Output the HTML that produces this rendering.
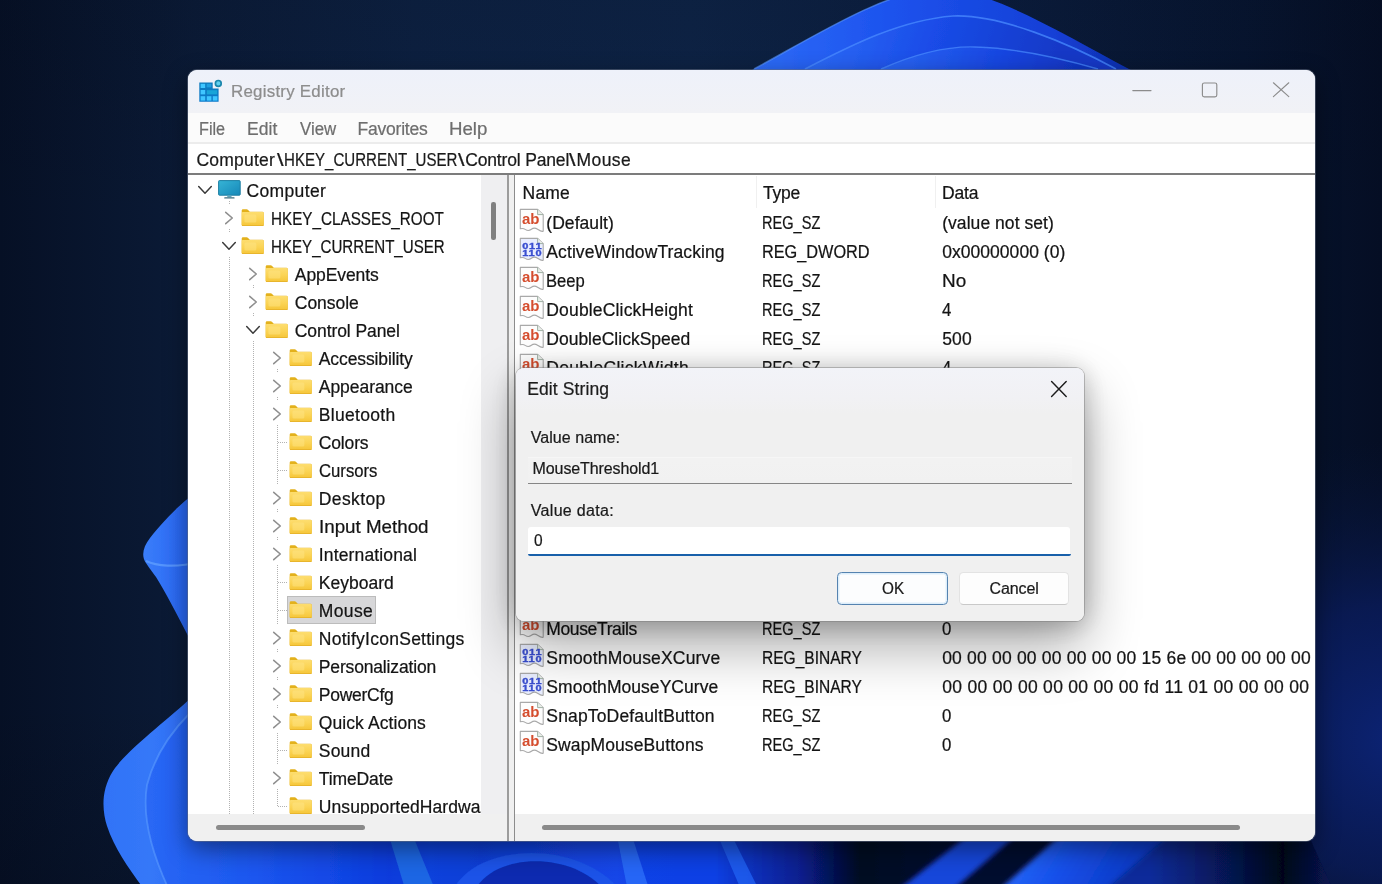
<!DOCTYPE html>
<html lang="en"><head><meta charset="utf-8"><title>Registry Editor</title>
<style>
html,body{margin:0;padding:0}
body{width:1382px;height:884px;overflow:hidden;position:relative;background:#08142b;
 font-family:"Liberation Sans",sans-serif}
.t{position:absolute;white-space:nowrap;line-height:24px;height:24px;-webkit-text-stroke:.22px}
.abs{position:absolute}
#win{position:absolute;left:188px;top:70px;width:1127px;height:771px;border-radius:9px;overflow:hidden;background:#fff;will-change:transform}
</style></head><body>

<svg class="abs" style="left:0;top:0" width="1382" height="884" viewBox="0 0 1382 884">
<defs>
<linearGradient id="bg" x1="0" y1="0" x2="1382" y2="0" gradientUnits="userSpaceOnUse">
 <stop offset="0" stop-color="#061025"/><stop offset=".14" stop-color="#0b1b37"/><stop offset=".3" stop-color="#0d2142"/><stop offset=".5" stop-color="#0e2447"/><stop offset=".72" stop-color="#0b1d3e"/><stop offset=".9" stop-color="#071530"/><stop offset="1" stop-color="#050e24"/>
</linearGradient>
<linearGradient id="bgv" x1="0" y1="0" x2="0" y2="884" gradientUnits="userSpaceOnUse">
 <stop offset="0" stop-color="#040a18" stop-opacity=".12"/><stop offset=".25" stop-color="#040a18" stop-opacity="0"/><stop offset=".8" stop-color="#040a18" stop-opacity="0"/><stop offset="1" stop-color="#040a18" stop-opacity=".3"/>
</linearGradient>
<linearGradient id="a1" x1="754" y1="0" x2="1129" y2="0" gradientUnits="userSpaceOnUse">
 <stop offset="0" stop-color="#2e6cf7"/><stop offset=".35" stop-color="#1d53ee"/><stop offset=".8" stop-color="#143fd6"/><stop offset="1" stop-color="#0f2fae"/>
</linearGradient>
<linearGradient id="a2" x1="805" y1="10" x2="1050" y2="90" gradientUnits="userSpaceOnUse">
 <stop offset="0" stop-color="#2f6ff8"/><stop offset=".5" stop-color="#1a4ce8"/><stop offset="1" stop-color="#1238c6"/>
</linearGradient>
<linearGradient id="a3" x1="880" y1="40" x2="1080" y2="90" gradientUnits="userSpaceOnUse">
 <stop offset="0" stop-color="#2b69f6"/><stop offset=".6" stop-color="#1745e0"/><stop offset="1" stop-color="#1034c0"/>
</linearGradient>
<linearGradient id="p1" x1="140" y1="0" x2="260" y2="0" gradientUnits="userSpaceOnUse">
 <stop offset="0" stop-color="#3c80fa"/><stop offset=".35" stop-color="#2a68f4"/><stop offset="1" stop-color="#1d55ee"/>
</linearGradient>
<linearGradient id="p2" x1="100" y1="0" x2="200" y2="0" gradientUnits="userSpaceOnUse">
 <stop offset="0" stop-color="#2f72f7"/><stop offset=".5" stop-color="#3578f8"/><stop offset="1" stop-color="#2b69f5"/>
</linearGradient>
<linearGradient id="p3" x1="145" y1="0" x2="270" y2="0" gradientUnits="userSpaceOnUse">
 <stop offset="0" stop-color="#2a68f5"/><stop offset=".4" stop-color="#2260f2"/><stop offset="1" stop-color="#1b54ee"/>
</linearGradient>
<linearGradient id="bt" x1="260" y1="0" x2="1382" y2="0" gradientUnits="userSpaceOnUse">
 <stop offset="0.0000" stop-color="#1b54ee"/>
 <stop offset="0.0624" stop-color="#1248e6"/>
 <stop offset="0.1150" stop-color="#0d3bdc"/>
 <stop offset="0.1515" stop-color="#1042dc"/>
 <stop offset="0.1961" stop-color="#0f3ed6"/>
 <stop offset="0.2674" stop-color="#1243e2"/>
 <stop offset="0.3182" stop-color="#1446e8"/>
 <stop offset="0.3387" stop-color="#0f42e6"/>
 <stop offset="0.4055" stop-color="#0e40e4"/>
 <stop offset="0.4234" stop-color="#0c36cc"/>
 <stop offset="0.4813" stop-color="#081f8e"/>
 <stop offset="0.5348" stop-color="#030722"/>
 <stop offset="0.6061" stop-color="#040a2e"/>
 <stop offset="1.0000" stop-color="#040a2c"/>
</linearGradient>
<linearGradient id="band" x1="1030" y1="840" x2="1130" y2="900" gradientUnits="userSpaceOnUse">
 <stop offset="0" stop-color="#2464f6"/><stop offset=".35" stop-color="#1650ea"/><stop offset="1" stop-color="#0b36c0"/>
</linearGradient>
<linearGradient id="rt" x1="1150" y1="0" x2="1334" y2="0" gradientUnits="userSpaceOnUse">
 <stop offset="0" stop-color="#0a2c9a"/><stop offset=".45" stop-color="#06154e"/><stop offset=".72" stop-color="#03061a"/><stop offset="1" stop-color="#081654"/>
</linearGradient>
<radialGradient id="rs" cx="1395" cy="740" r="300" gradientUnits="userSpaceOnUse">
 <stop offset="0" stop-color="#0c2478" stop-opacity=".95"/><stop offset=".45" stop-color="#0a1c5c" stop-opacity=".8"/><stop offset="1" stop-color="#081538" stop-opacity="0"/>
</radialGradient>
<filter id="b1" x="-5%" y="-5%" width="110%" height="110%"><feGaussianBlur stdDeviation="0.7"/></filter>
<filter id="b3" x="-5%" y="-20%" width="110%" height="140%"><feGaussianBlur stdDeviation="2.5"/></filter>
</defs>
<rect width="1382" height="884" fill="url(#bg)"/><rect width="1382" height="884" fill="url(#bgv)"/>
<!-- right side deep-blue glow -->
<rect x="1180" y="380" width="202" height="504" fill="url(#rs)"/>
<!-- top arch -->
<g filter="url(#b1)">
<path d="M690 102 L754 69 C815 36 880 -6 940 -14 C1000 -6 1070 38 1129 69 L1190 100 Z" fill="url(#a1)"/>
<path d="M760 92 L805 69 C850 46 900 20 953 16 C1000 14 1070 44 1116 69 L1160 95 Z" fill="url(#a2)"/>
<path d="M805 69 C850 46 900 20 953 16 C1000 14 1070 44 1116 69" fill="none" stroke="#4a8bff" stroke-width="1.6" opacity=".75"/>
<path d="M850 86 L881 69 C915 54 945 46 975 47 C1015 48 1060 58 1098 69 L1140 85 Z" fill="url(#a3)"/>
<path d="M881 69 C915 54 945 46 975 47 C1015 48 1060 58 1098 69" fill="none" stroke="#4a8bff" stroke-width="1.4" opacity=".7"/>
<path d="M754 69 C815 36 880 -6 940 -14" fill="none" stroke="#5a98ff" stroke-width="1.5" opacity=".6"/>
</g>
<!-- left petals -->
<g filter="url(#b1)">
<path d="M270 440 C240 465 205 485 188.6 498 C176 508 161 524 150 538 C143 547 141 556 146 563 C150 569 153 573 156 577 C164 590 176 612 188.6 637 L270 670 Z" fill="url(#p1)"/>
<path d="M146 561 C156 566 175 568 200 562" fill="none" stroke="#62a0ff" stroke-width="2.2" opacity=".75"/>
<path d="M270 630 C235 660 205 684 188.6 700 C165 722 127 750 113 771 C101 790 102 810 107 826 C115 850 130 870 146 892 L270 892 Z" fill="url(#p2)"/>
<path d="M270 650 C230 685 205 700 190 713 C170 733 154 758 147 785 C142 815 150 850 170 892 L270 892 Z" fill="url(#p3)"/>
<path d="M190 713 C170 733 154 758 147 785 C142 815 150 850 170 892" fill="none" stroke="#5c9cff" stroke-width="1.8" opacity=".6"/>
</g>
<!-- bottom strip -->
<g filter="url(#b1)">
<path d="M258 834 L1300 834 L1326 892 L258 892 Z" fill="url(#bt)"/>
<path d="M389 836 L413 836 L436 892 L406 892 Z" fill="#1d66e4"/>
<path d="M452 892 C474 842 580 838 622 892 Z" fill="#1a52e8"/><path d="M474 892 C492 852 574 850 606 892 Z" fill="#0a2cb0"/>
<path d="M617 836 L632 836 L650 892 L628 892 Z" fill="#2b6cf8" opacity=".85"/>
<path d="M718 836 L732 836 L760 892 L742 892 Z" fill="#2262f2" opacity=".8"/>
<g filter="url(#b3)"><path d="M972 832 L1020 832 L946 896 L890 896 Z" fill="#1646da"/></g>
<path d="M1150 834 L1308 834 L1334 892 L1080 892 Z" fill="url(#rt)"/>
<g filter="url(#b3)"><path d="M1064 832 L1172 832 L1098 896 L992 896 Z" fill="url(#band)"/></g>
</g>
</svg>

<div id="winshadow" class="abs" style="left:188px;top:70px;width:1127px;height:771px;border-radius:9px;box-shadow:0 0 0 1px rgba(96,108,130,.55),0 8px 24px rgba(0,0,0,.45)"></div>
<div id="win">
<div style="position:absolute;left:0.00px;top:0.00px;width:1127.00px;height:43.00px;background:linear-gradient(#eef1fa,#f1f2f6)"></div>
<div style="position:absolute;left:0.00px;top:43.00px;width:1127.00px;height:29.00px;background:#fbfbfb"></div>
<div style="position:absolute;left:0.00px;top:72.00px;width:1127.00px;height:1.50px;background:#ececec"></div>
<div style="position:absolute;left:0.00px;top:73.50px;width:1127.00px;height:29.50px;background:#fff"></div>
<div style="position:absolute;left:0.00px;top:103.00px;width:1127.00px;height:1.80px;background:#7c7c7c"></div>
<svg class="abs" style="left:9px;top:5.6px" width="30" height="30" viewBox="197 76 30 30">
 <defs><linearGradient id="rg" x1="0" y1="0" x2="0" y2="1"><stop offset="0" stop-color="#0e7abc"/><stop offset="1" stop-color="#0c7bcb"/></linearGradient></defs>
 <path d="M199.3 82.4 H212.7 V88.6 H218.6 V101.8 H199.3 Z" fill="url(#rg)"/>
 <g fill="#3fc6ff">
  <rect x="200.6" y="83.8" width="4.6" height="4.2"/><rect x="206.6" y="83.8" width="4.8" height="3.6" fill="#1f9fe0"/>
  <rect x="200.6" y="90" width="4.6" height="4.4"/><rect x="206.8" y="90.2" width="10.4" height="4.2" fill="#18a4d8"/>
  <rect x="200.6" y="96.2" width="4.6" height="4.4"/><rect x="206.8" y="96.2" width="4.6" height="4.4"/><rect x="212.8" y="96.2" width="4.6" height="4.4"/>
 </g>
 <circle cx="218.3" cy="83.4" r="2.9" fill="#5fd0ef" stroke="#1a86ac" stroke-width="1.7"/>
</svg>
<svg class="abs" style="left:930px;top:0" width="197" height="43" viewBox="1118 70 197 43" fill="none" stroke="#8c8c8c" stroke-width="1.15" stroke-linecap="round">
 <path d="M1132.8 90.6 H1151"/>
 <rect x="1202.4" y="83" width="14.4" height="13.8" rx="1.8"/>
 <path d="M1273.4 82.8 L1288.8 96.6 M1288.8 82.8 L1273.4 96.6"/>
</svg>

<span id="t0" class="t" style="left:43.00px;top:9.54px;font-size:16.90px;color:#8d8d8d;letter-spacing:0.247px;">Registry Editor</span>
<span id="t1" class="t" style="left:11.07px;top:46.94px;font-size:17.50px;color:#6e6e6e;transform:scaleX(0.9257);transform-origin:0 50%;">File</span>
<span id="t2" class="t" style="left:59.00px;top:46.94px;font-size:17.50px;color:#6e6e6e;letter-spacing:0.069px;">Edit</span>
<span id="t3" class="t" style="left:111.50px;top:46.94px;font-size:17.50px;color:#6e6e6e;transform:scaleX(0.9611);transform-origin:0 50%;">View</span>
<span id="t4" class="t" style="left:169.50px;top:46.94px;font-size:17.50px;color:#6e6e6e;letter-spacing:-0.214px;">Favorites</span>
<span id="t5" class="t" style="left:261.43px;top:46.94px;font-size:17.50px;color:#6e6e6e;transform:scaleX(1.0654);transform-origin:0 50%;">Help</span>
<span id="t6" class="t" style="left:8.50px;top:78.14px;font-size:17.50px;color:#1a1a1a;letter-spacing:0.213px;">Computer</span>
<span id="t7" class="t" style="left:88.60px;top:78.14px;font-size:17.50px;color:#1a1a1a;transform:scaleX(1.3500);transform-origin:0 50%;">\</span>
<span id="t8" class="t" style="left:96.14px;top:78.14px;font-size:17.50px;color:#1a1a1a;transform:scaleX(0.8615);transform-origin:0 50%;">HKEY_CURRENT_USER</span>
<span id="t9" class="t" style="left:269.90px;top:78.14px;font-size:17.50px;color:#1a1a1a;transform:scaleX(1.3400);transform-origin:0 50%;">\</span>
<span id="t10" class="t" style="left:277.20px;top:78.14px;font-size:17.50px;color:#1a1a1a;letter-spacing:-0.162px;">Control Panel</span>
<span id="t11" class="t" style="left:380.80px;top:78.14px;font-size:17.50px;color:#1a1a1a;transform:scaleX(1.3500);transform-origin:0 50%;">\</span>
<span id="t12" class="t" style="left:388.60px;top:78.14px;font-size:17.50px;color:#1a1a1a;letter-spacing:0.402px;">Mouse</span>
<div style="position:absolute;left:0.00px;top:104.80px;width:293.00px;height:639.20px;background:#fff"></div>
<div style="position:absolute;left:293.00px;top:104.80px;width:26.20px;height:639.20px;background:#efeff1"></div>
<div style="position:absolute;left:303.40px;top:132.00px;width:4.50px;height:38.00px;background:#808080;border-radius:2.2px"></div>
<div style="position:absolute;left:0.00px;top:744.00px;width:319.20px;height:27.00px;background:#f0f0f0"></div>
<div style="position:absolute;left:28.00px;top:755.00px;width:148.50px;height:5.00px;background:#8a8a8a;border-radius:2.5px"></div>
<div style="position:absolute;left:319.20px;top:104.80px;width:1.60px;height:666.20px;background:#9c9c9c"></div>
<div style="position:absolute;left:320.80px;top:104.80px;width:5.00px;height:666.20px;background:#f0f0f0"></div>
<div style="position:absolute;left:325.80px;top:104.80px;width:1.40px;height:666.20px;background:#8c8c8c"></div>
<div style="position:absolute;left:327.20px;top:104.80px;width:799.80px;height:639.20px;background:#fff"></div>
<div style="position:absolute;left:327.20px;top:744.00px;width:799.80px;height:27.00px;background:#f0f0f0"></div>
<div style="position:absolute;left:354.00px;top:754.50px;width:697.50px;height:5.50px;background:#8a8a8a;border-radius:2.7px"></div>

<div class="abs" style="left:0;top:104.80px;width:293px;height:639.20px;overflow:hidden">
<div style="position:absolute;left:41.00px;top:26.30px;width:1.00px;height:4.00px;background:repeating-linear-gradient(to bottom,#b2b2b2 0 1px,transparent 1px 2px)"></div>
<div style="position:absolute;left:41.00px;top:54.30px;width:1.00px;height:4.00px;background:repeating-linear-gradient(to bottom,#b2b2b2 0 1px,transparent 1px 2px)"></div>
<div style="position:absolute;left:41.00px;top:82.30px;width:1.00px;height:556.90px;background:repeating-linear-gradient(to bottom,#b2b2b2 0 1px,transparent 1px 2px)"></div>
<div style="position:absolute;left:65.30px;top:110.30px;width:1.00px;height:4.00px;background:repeating-linear-gradient(to bottom,#b2b2b2 0 1px,transparent 1px 2px)"></div>
<div style="position:absolute;left:65.30px;top:138.30px;width:1.00px;height:4.00px;background:repeating-linear-gradient(to bottom,#b2b2b2 0 1px,transparent 1px 2px)"></div>
<div style="position:absolute;left:65.30px;top:166.30px;width:1.00px;height:472.90px;background:repeating-linear-gradient(to bottom,#b2b2b2 0 1px,transparent 1px 2px)"></div>
<div style="position:absolute;left:89.00px;top:194.30px;width:1.00px;height:4.00px;background:repeating-linear-gradient(to bottom,#b2b2b2 0 1px,transparent 1px 2px)"></div>
<div style="position:absolute;left:89.00px;top:222.30px;width:1.00px;height:4.00px;background:repeating-linear-gradient(to bottom,#b2b2b2 0 1px,transparent 1px 2px)"></div>
<div style="position:absolute;left:89.00px;top:250.30px;width:1.00px;height:4.00px;background:repeating-linear-gradient(to bottom,#b2b2b2 0 1px,transparent 1px 2px)"></div>
<div style="position:absolute;left:89.00px;top:254.30px;width:1.00px;height:28.00px;background:repeating-linear-gradient(to bottom,#b2b2b2 0 1px,transparent 1px 2px)"></div>
<div style="position:absolute;left:89.50px;top:267.60px;width:10.50px;height:1.00px;background:repeating-linear-gradient(to right,#b2b2b2 0 1px,transparent 1px 2px)"></div>
<div style="position:absolute;left:89.00px;top:282.30px;width:1.00px;height:28.00px;background:repeating-linear-gradient(to bottom,#b2b2b2 0 1px,transparent 1px 2px)"></div>
<div style="position:absolute;left:89.50px;top:295.60px;width:10.50px;height:1.00px;background:repeating-linear-gradient(to right,#b2b2b2 0 1px,transparent 1px 2px)"></div>
<div style="position:absolute;left:89.00px;top:334.30px;width:1.00px;height:4.00px;background:repeating-linear-gradient(to bottom,#b2b2b2 0 1px,transparent 1px 2px)"></div>
<div style="position:absolute;left:89.00px;top:362.30px;width:1.00px;height:4.00px;background:repeating-linear-gradient(to bottom,#b2b2b2 0 1px,transparent 1px 2px)"></div>
<div style="position:absolute;left:89.00px;top:390.30px;width:1.00px;height:4.00px;background:repeating-linear-gradient(to bottom,#b2b2b2 0 1px,transparent 1px 2px)"></div>
<div style="position:absolute;left:89.00px;top:394.30px;width:1.00px;height:28.00px;background:repeating-linear-gradient(to bottom,#b2b2b2 0 1px,transparent 1px 2px)"></div>
<div style="position:absolute;left:89.50px;top:407.60px;width:10.50px;height:1.00px;background:repeating-linear-gradient(to right,#b2b2b2 0 1px,transparent 1px 2px)"></div>
<div style="position:absolute;left:89.00px;top:422.30px;width:1.00px;height:28.00px;background:repeating-linear-gradient(to bottom,#b2b2b2 0 1px,transparent 1px 2px)"></div>
<div style="position:absolute;left:89.50px;top:435.60px;width:10.50px;height:1.00px;background:repeating-linear-gradient(to right,#b2b2b2 0 1px,transparent 1px 2px)"></div>
<div style="position:absolute;left:89.00px;top:474.30px;width:1.00px;height:4.00px;background:repeating-linear-gradient(to bottom,#b2b2b2 0 1px,transparent 1px 2px)"></div>
<div style="position:absolute;left:89.00px;top:502.30px;width:1.00px;height:4.00px;background:repeating-linear-gradient(to bottom,#b2b2b2 0 1px,transparent 1px 2px)"></div>
<div style="position:absolute;left:89.00px;top:530.30px;width:1.00px;height:4.00px;background:repeating-linear-gradient(to bottom,#b2b2b2 0 1px,transparent 1px 2px)"></div>
<div style="position:absolute;left:89.00px;top:558.30px;width:1.00px;height:4.00px;background:repeating-linear-gradient(to bottom,#b2b2b2 0 1px,transparent 1px 2px)"></div>
<div style="position:absolute;left:89.00px;top:562.30px;width:1.00px;height:28.00px;background:repeating-linear-gradient(to bottom,#b2b2b2 0 1px,transparent 1px 2px)"></div>
<div style="position:absolute;left:89.50px;top:575.60px;width:10.50px;height:1.00px;background:repeating-linear-gradient(to right,#b2b2b2 0 1px,transparent 1px 2px)"></div>
<div style="position:absolute;left:89.00px;top:614.30px;width:1.00px;height:4.00px;background:repeating-linear-gradient(to bottom,#b2b2b2 0 1px,transparent 1px 2px)"></div>
<div style="position:absolute;left:89.00px;top:618.30px;width:1.00px;height:14.00px;background:repeating-linear-gradient(to bottom,#b2b2b2 0 1px,transparent 1px 2px)"></div>
<div style="position:absolute;left:89.50px;top:631.60px;width:10.50px;height:1.00px;background:repeating-linear-gradient(to right,#b2b2b2 0 1px,transparent 1px 2px)"></div>
<svg class="abs" style="left:8.70px;top:9.10px" width="16" height="12" viewBox="0 0 16 12"><path d="M1.7 2.6 L8 9.2 L14.3 2.6" fill="none" stroke="#3a3a3a" stroke-width="1.5" stroke-linecap="round" stroke-linejoin="round"/></svg>
<svg class="abs" style="left:29.60px;top:5.50px" width="24" height="20" viewBox="0 0 24 20"><defs><linearGradient id="mon" x1="0" y1="0" x2="1" y2="1"><stop offset="0" stop-color="#36b4d6"/><stop offset="1" stop-color="#1688b8"/></linearGradient></defs><rect x=".6" y=".6" width="21.6" height="14.6" rx=".8" fill="url(#mon)" stroke="#1d7fa3" stroke-width="1"/><path d="M9.6 15.4 H13.2 L13.8 17.3 H9 Z" fill="#5fa6bd"/><rect x="6.2" y="17.2" width="10.4" height="1.3" rx=".6" fill="#3f6f80"/></svg>
<span id="t13" class="t" style="left:58.50px;top:4.54px;font-size:17.50px;color:#141414;letter-spacing:0.356px;">Computer</span>
<svg class="abs" style="left:35.30px;top:35.20px" width="12" height="16" viewBox="0 0 12 16"><path d="M2.7 2.3 L9.3 8 L2.7 13.7" fill="none" stroke="#8f8f8f" stroke-width="1.55" stroke-linecap="round" stroke-linejoin="round"/></svg>
<svg class="abs" style="left:53.00px;top:33.80px" width="24" height="18" viewBox="0 0 24 18"><defs><linearGradient id="fg1" x1="0" y1="0" x2="0" y2="1"><stop offset="0" stop-color="#fddd70"/><stop offset=".5" stop-color="#fbd455"/><stop offset="1" stop-color="#f5c538"/></linearGradient></defs><path d="M.7 1.5 Q.7 .2 2 .2 H5.6 Q6.5 .2 7.1 .9 L8.8 2.7 H21.4 Q22.7 2.7 22.7 4 V15.7 Q22.7 17 21.4 17 H2 Q.7 17 .7 15.7 Z" fill="#e3b11c"/><path d="M.7 3.9 Q.7 2.9 1.8 2.9 H21.5 Q22.7 2.9 22.7 4.1 V15.7 Q22.7 17 21.4 17 H2 Q.7 17 .7 15.7 Z" fill="url(#fg1)"/><rect x="3.4" y="5.6" width="12" height="8" rx="1.5" fill="#ffe68c" opacity=".45"/><path d="M1 16.5 H22.4" stroke="#e2ad26" stroke-width=".9" opacity=".75"/></svg>
<span id="t14" class="t" style="left:82.70px;top:32.54px;font-size:17.50px;color:#141414;transform:scaleX(0.8715);transform-origin:0 50%;">HKEY_CLASSES_ROOT</span>
<svg class="abs" style="left:33.30px;top:65.10px" width="16" height="12" viewBox="0 0 16 12"><path d="M1.7 2.6 L8 9.2 L14.3 2.6" fill="none" stroke="#3a3a3a" stroke-width="1.5" stroke-linecap="round" stroke-linejoin="round"/></svg>
<svg class="abs" style="left:53.00px;top:61.80px" width="24" height="18" viewBox="0 0 24 18"><defs><linearGradient id="fg2" x1="0" y1="0" x2="0" y2="1"><stop offset="0" stop-color="#fddd70"/><stop offset=".5" stop-color="#fbd455"/><stop offset="1" stop-color="#f5c538"/></linearGradient></defs><path d="M.7 1.5 Q.7 .2 2 .2 H5.6 Q6.5 .2 7.1 .9 L8.8 2.7 H21.4 Q22.7 2.7 22.7 4 V15.7 Q22.7 17 21.4 17 H2 Q.7 17 .7 15.7 Z" fill="#e3b11c"/><path d="M.7 3.9 Q.7 2.9 1.8 2.9 H21.5 Q22.7 2.9 22.7 4.1 V15.7 Q22.7 17 21.4 17 H2 Q.7 17 .7 15.7 Z" fill="url(#fg2)"/><rect x="3.4" y="5.6" width="12" height="8" rx="1.5" fill="#ffe68c" opacity=".45"/><path d="M1 16.5 H22.4" stroke="#e2ad26" stroke-width=".9" opacity=".75"/></svg>
<span id="t15" class="t" style="left:82.70px;top:60.54px;font-size:17.50px;color:#141414;transform:scaleX(0.8630);transform-origin:0 50%;">HKEY_CURRENT_USER</span>
<svg class="abs" style="left:59.30px;top:91.20px" width="12" height="16" viewBox="0 0 12 16"><path d="M2.7 2.3 L9.3 8 L2.7 13.7" fill="none" stroke="#8f8f8f" stroke-width="1.55" stroke-linecap="round" stroke-linejoin="round"/></svg>
<svg class="abs" style="left:76.80px;top:89.80px" width="24" height="18" viewBox="0 0 24 18"><defs><linearGradient id="fg3" x1="0" y1="0" x2="0" y2="1"><stop offset="0" stop-color="#fddd70"/><stop offset=".5" stop-color="#fbd455"/><stop offset="1" stop-color="#f5c538"/></linearGradient></defs><path d="M.7 1.5 Q.7 .2 2 .2 H5.6 Q6.5 .2 7.1 .9 L8.8 2.7 H21.4 Q22.7 2.7 22.7 4 V15.7 Q22.7 17 21.4 17 H2 Q.7 17 .7 15.7 Z" fill="#e3b11c"/><path d="M.7 3.9 Q.7 2.9 1.8 2.9 H21.5 Q22.7 2.9 22.7 4.1 V15.7 Q22.7 17 21.4 17 H2 Q.7 17 .7 15.7 Z" fill="url(#fg3)"/><rect x="3.4" y="5.6" width="12" height="8" rx="1.5" fill="#ffe68c" opacity=".45"/><path d="M1 16.5 H22.4" stroke="#e2ad26" stroke-width=".9" opacity=".75"/></svg>
<span id="t16" class="t" style="left:106.80px;top:88.54px;font-size:17.50px;color:#141414;letter-spacing:-0.086px;">AppEvents</span>
<svg class="abs" style="left:59.30px;top:119.20px" width="12" height="16" viewBox="0 0 12 16"><path d="M2.7 2.3 L9.3 8 L2.7 13.7" fill="none" stroke="#8f8f8f" stroke-width="1.55" stroke-linecap="round" stroke-linejoin="round"/></svg>
<svg class="abs" style="left:76.80px;top:117.80px" width="24" height="18" viewBox="0 0 24 18"><defs><linearGradient id="fg4" x1="0" y1="0" x2="0" y2="1"><stop offset="0" stop-color="#fddd70"/><stop offset=".5" stop-color="#fbd455"/><stop offset="1" stop-color="#f5c538"/></linearGradient></defs><path d="M.7 1.5 Q.7 .2 2 .2 H5.6 Q6.5 .2 7.1 .9 L8.8 2.7 H21.4 Q22.7 2.7 22.7 4 V15.7 Q22.7 17 21.4 17 H2 Q.7 17 .7 15.7 Z" fill="#e3b11c"/><path d="M.7 3.9 Q.7 2.9 1.8 2.9 H21.5 Q22.7 2.9 22.7 4.1 V15.7 Q22.7 17 21.4 17 H2 Q.7 17 .7 15.7 Z" fill="url(#fg4)"/><rect x="3.4" y="5.6" width="12" height="8" rx="1.5" fill="#ffe68c" opacity=".45"/><path d="M1 16.5 H22.4" stroke="#e2ad26" stroke-width=".9" opacity=".75"/></svg>
<span id="t17" class="t" style="left:106.80px;top:116.54px;font-size:17.50px;color:#141414;letter-spacing:-0.046px;">Console</span>
<svg class="abs" style="left:57.30px;top:149.10px" width="16" height="12" viewBox="0 0 16 12"><path d="M1.7 2.6 L8 9.2 L14.3 2.6" fill="none" stroke="#3a3a3a" stroke-width="1.5" stroke-linecap="round" stroke-linejoin="round"/></svg>
<svg class="abs" style="left:76.80px;top:145.80px" width="24" height="18" viewBox="0 0 24 18"><defs><linearGradient id="fg5" x1="0" y1="0" x2="0" y2="1"><stop offset="0" stop-color="#fddd70"/><stop offset=".5" stop-color="#fbd455"/><stop offset="1" stop-color="#f5c538"/></linearGradient></defs><path d="M.7 1.5 Q.7 .2 2 .2 H5.6 Q6.5 .2 7.1 .9 L8.8 2.7 H21.4 Q22.7 2.7 22.7 4 V15.7 Q22.7 17 21.4 17 H2 Q.7 17 .7 15.7 Z" fill="#e3b11c"/><path d="M.7 3.9 Q.7 2.9 1.8 2.9 H21.5 Q22.7 2.9 22.7 4.1 V15.7 Q22.7 17 21.4 17 H2 Q.7 17 .7 15.7 Z" fill="url(#fg5)"/><rect x="3.4" y="5.6" width="12" height="8" rx="1.5" fill="#ffe68c" opacity=".45"/><path d="M1 16.5 H22.4" stroke="#e2ad26" stroke-width=".9" opacity=".75"/></svg>
<span id="t18" class="t" style="left:106.80px;top:144.54px;font-size:17.50px;color:#141414;letter-spacing:-0.079px;">Control Panel</span>
<svg class="abs" style="left:83.20px;top:175.20px" width="12" height="16" viewBox="0 0 12 16"><path d="M2.7 2.3 L9.3 8 L2.7 13.7" fill="none" stroke="#8f8f8f" stroke-width="1.55" stroke-linecap="round" stroke-linejoin="round"/></svg>
<svg class="abs" style="left:100.60px;top:173.80px" width="24" height="18" viewBox="0 0 24 18"><defs><linearGradient id="fg6" x1="0" y1="0" x2="0" y2="1"><stop offset="0" stop-color="#fddd70"/><stop offset=".5" stop-color="#fbd455"/><stop offset="1" stop-color="#f5c538"/></linearGradient></defs><path d="M.7 1.5 Q.7 .2 2 .2 H5.6 Q6.5 .2 7.1 .9 L8.8 2.7 H21.4 Q22.7 2.7 22.7 4 V15.7 Q22.7 17 21.4 17 H2 Q.7 17 .7 15.7 Z" fill="#e3b11c"/><path d="M.7 3.9 Q.7 2.9 1.8 2.9 H21.5 Q22.7 2.9 22.7 4.1 V15.7 Q22.7 17 21.4 17 H2 Q.7 17 .7 15.7 Z" fill="url(#fg6)"/><rect x="3.4" y="5.6" width="12" height="8" rx="1.5" fill="#ffe68c" opacity=".45"/><path d="M1 16.5 H22.4" stroke="#e2ad26" stroke-width=".9" opacity=".75"/></svg>
<span id="t19" class="t" style="left:130.80px;top:172.54px;font-size:17.50px;color:#141414;letter-spacing:-0.113px;">Accessibility</span>
<svg class="abs" style="left:83.20px;top:203.20px" width="12" height="16" viewBox="0 0 12 16"><path d="M2.7 2.3 L9.3 8 L2.7 13.7" fill="none" stroke="#8f8f8f" stroke-width="1.55" stroke-linecap="round" stroke-linejoin="round"/></svg>
<svg class="abs" style="left:100.60px;top:201.80px" width="24" height="18" viewBox="0 0 24 18"><defs><linearGradient id="fg7" x1="0" y1="0" x2="0" y2="1"><stop offset="0" stop-color="#fddd70"/><stop offset=".5" stop-color="#fbd455"/><stop offset="1" stop-color="#f5c538"/></linearGradient></defs><path d="M.7 1.5 Q.7 .2 2 .2 H5.6 Q6.5 .2 7.1 .9 L8.8 2.7 H21.4 Q22.7 2.7 22.7 4 V15.7 Q22.7 17 21.4 17 H2 Q.7 17 .7 15.7 Z" fill="#e3b11c"/><path d="M.7 3.9 Q.7 2.9 1.8 2.9 H21.5 Q22.7 2.9 22.7 4.1 V15.7 Q22.7 17 21.4 17 H2 Q.7 17 .7 15.7 Z" fill="url(#fg7)"/><rect x="3.4" y="5.6" width="12" height="8" rx="1.5" fill="#ffe68c" opacity=".45"/><path d="M1 16.5 H22.4" stroke="#e2ad26" stroke-width=".9" opacity=".75"/></svg>
<span id="t20" class="t" style="left:130.80px;top:200.54px;font-size:17.50px;color:#141414;letter-spacing:-0.050px;">Appearance</span>
<svg class="abs" style="left:83.20px;top:231.20px" width="12" height="16" viewBox="0 0 12 16"><path d="M2.7 2.3 L9.3 8 L2.7 13.7" fill="none" stroke="#8f8f8f" stroke-width="1.55" stroke-linecap="round" stroke-linejoin="round"/></svg>
<svg class="abs" style="left:100.60px;top:229.80px" width="24" height="18" viewBox="0 0 24 18"><defs><linearGradient id="fg8" x1="0" y1="0" x2="0" y2="1"><stop offset="0" stop-color="#fddd70"/><stop offset=".5" stop-color="#fbd455"/><stop offset="1" stop-color="#f5c538"/></linearGradient></defs><path d="M.7 1.5 Q.7 .2 2 .2 H5.6 Q6.5 .2 7.1 .9 L8.8 2.7 H21.4 Q22.7 2.7 22.7 4 V15.7 Q22.7 17 21.4 17 H2 Q.7 17 .7 15.7 Z" fill="#e3b11c"/><path d="M.7 3.9 Q.7 2.9 1.8 2.9 H21.5 Q22.7 2.9 22.7 4.1 V15.7 Q22.7 17 21.4 17 H2 Q.7 17 .7 15.7 Z" fill="url(#fg8)"/><rect x="3.4" y="5.6" width="12" height="8" rx="1.5" fill="#ffe68c" opacity=".45"/><path d="M1 16.5 H22.4" stroke="#e2ad26" stroke-width=".9" opacity=".75"/></svg>
<span id="t21" class="t" style="left:130.80px;top:228.54px;font-size:17.50px;color:#141414;letter-spacing:0.311px;">Bluetooth</span>
<svg class="abs" style="left:100.60px;top:257.80px" width="24" height="18" viewBox="0 0 24 18"><defs><linearGradient id="fg9" x1="0" y1="0" x2="0" y2="1"><stop offset="0" stop-color="#fddd70"/><stop offset=".5" stop-color="#fbd455"/><stop offset="1" stop-color="#f5c538"/></linearGradient></defs><path d="M.7 1.5 Q.7 .2 2 .2 H5.6 Q6.5 .2 7.1 .9 L8.8 2.7 H21.4 Q22.7 2.7 22.7 4 V15.7 Q22.7 17 21.4 17 H2 Q.7 17 .7 15.7 Z" fill="#e3b11c"/><path d="M.7 3.9 Q.7 2.9 1.8 2.9 H21.5 Q22.7 2.9 22.7 4.1 V15.7 Q22.7 17 21.4 17 H2 Q.7 17 .7 15.7 Z" fill="url(#fg9)"/><rect x="3.4" y="5.6" width="12" height="8" rx="1.5" fill="#ffe68c" opacity=".45"/><path d="M1 16.5 H22.4" stroke="#e2ad26" stroke-width=".9" opacity=".75"/></svg>
<span id="t22" class="t" style="left:130.80px;top:256.54px;font-size:17.50px;color:#141414;letter-spacing:-0.164px;">Colors</span>
<svg class="abs" style="left:100.60px;top:285.80px" width="24" height="18" viewBox="0 0 24 18"><defs><linearGradient id="fg10" x1="0" y1="0" x2="0" y2="1"><stop offset="0" stop-color="#fddd70"/><stop offset=".5" stop-color="#fbd455"/><stop offset="1" stop-color="#f5c538"/></linearGradient></defs><path d="M.7 1.5 Q.7 .2 2 .2 H5.6 Q6.5 .2 7.1 .9 L8.8 2.7 H21.4 Q22.7 2.7 22.7 4 V15.7 Q22.7 17 21.4 17 H2 Q.7 17 .7 15.7 Z" fill="#e3b11c"/><path d="M.7 3.9 Q.7 2.9 1.8 2.9 H21.5 Q22.7 2.9 22.7 4.1 V15.7 Q22.7 17 21.4 17 H2 Q.7 17 .7 15.7 Z" fill="url(#fg10)"/><rect x="3.4" y="5.6" width="12" height="8" rx="1.5" fill="#ffe68c" opacity=".45"/><path d="M1 16.5 H22.4" stroke="#e2ad26" stroke-width=".9" opacity=".75"/></svg>
<span id="t23" class="t" style="left:130.80px;top:284.54px;font-size:17.50px;color:#141414;transform:scaleX(0.9543);transform-origin:0 50%;">Cursors</span>
<svg class="abs" style="left:83.20px;top:315.20px" width="12" height="16" viewBox="0 0 12 16"><path d="M2.7 2.3 L9.3 8 L2.7 13.7" fill="none" stroke="#8f8f8f" stroke-width="1.55" stroke-linecap="round" stroke-linejoin="round"/></svg>
<svg class="abs" style="left:100.60px;top:313.80px" width="24" height="18" viewBox="0 0 24 18"><defs><linearGradient id="fg11" x1="0" y1="0" x2="0" y2="1"><stop offset="0" stop-color="#fddd70"/><stop offset=".5" stop-color="#fbd455"/><stop offset="1" stop-color="#f5c538"/></linearGradient></defs><path d="M.7 1.5 Q.7 .2 2 .2 H5.6 Q6.5 .2 7.1 .9 L8.8 2.7 H21.4 Q22.7 2.7 22.7 4 V15.7 Q22.7 17 21.4 17 H2 Q.7 17 .7 15.7 Z" fill="#e3b11c"/><path d="M.7 3.9 Q.7 2.9 1.8 2.9 H21.5 Q22.7 2.9 22.7 4.1 V15.7 Q22.7 17 21.4 17 H2 Q.7 17 .7 15.7 Z" fill="url(#fg11)"/><rect x="3.4" y="5.6" width="12" height="8" rx="1.5" fill="#ffe68c" opacity=".45"/><path d="M1 16.5 H22.4" stroke="#e2ad26" stroke-width=".9" opacity=".75"/></svg>
<span id="t24" class="t" style="left:130.80px;top:312.54px;font-size:17.50px;color:#141414;letter-spacing:0.372px;">Desktop</span>
<svg class="abs" style="left:83.20px;top:343.20px" width="12" height="16" viewBox="0 0 12 16"><path d="M2.7 2.3 L9.3 8 L2.7 13.7" fill="none" stroke="#8f8f8f" stroke-width="1.55" stroke-linecap="round" stroke-linejoin="round"/></svg>
<svg class="abs" style="left:100.60px;top:341.80px" width="24" height="18" viewBox="0 0 24 18"><defs><linearGradient id="fg12" x1="0" y1="0" x2="0" y2="1"><stop offset="0" stop-color="#fddd70"/><stop offset=".5" stop-color="#fbd455"/><stop offset="1" stop-color="#f5c538"/></linearGradient></defs><path d="M.7 1.5 Q.7 .2 2 .2 H5.6 Q6.5 .2 7.1 .9 L8.8 2.7 H21.4 Q22.7 2.7 22.7 4 V15.7 Q22.7 17 21.4 17 H2 Q.7 17 .7 15.7 Z" fill="#e3b11c"/><path d="M.7 3.9 Q.7 2.9 1.8 2.9 H21.5 Q22.7 2.9 22.7 4.1 V15.7 Q22.7 17 21.4 17 H2 Q.7 17 .7 15.7 Z" fill="url(#fg12)"/><rect x="3.4" y="5.6" width="12" height="8" rx="1.5" fill="#ffe68c" opacity=".45"/><path d="M1 16.5 H22.4" stroke="#e2ad26" stroke-width=".9" opacity=".75"/></svg>
<span id="t25" class="t" style="left:130.80px;top:340.54px;font-size:17.50px;color:#141414;transform:scaleX(1.0725);transform-origin:0 50%;">Input Method</span>
<svg class="abs" style="left:83.20px;top:371.20px" width="12" height="16" viewBox="0 0 12 16"><path d="M2.7 2.3 L9.3 8 L2.7 13.7" fill="none" stroke="#8f8f8f" stroke-width="1.55" stroke-linecap="round" stroke-linejoin="round"/></svg>
<svg class="abs" style="left:100.60px;top:369.80px" width="24" height="18" viewBox="0 0 24 18"><defs><linearGradient id="fg13" x1="0" y1="0" x2="0" y2="1"><stop offset="0" stop-color="#fddd70"/><stop offset=".5" stop-color="#fbd455"/><stop offset="1" stop-color="#f5c538"/></linearGradient></defs><path d="M.7 1.5 Q.7 .2 2 .2 H5.6 Q6.5 .2 7.1 .9 L8.8 2.7 H21.4 Q22.7 2.7 22.7 4 V15.7 Q22.7 17 21.4 17 H2 Q.7 17 .7 15.7 Z" fill="#e3b11c"/><path d="M.7 3.9 Q.7 2.9 1.8 2.9 H21.5 Q22.7 2.9 22.7 4.1 V15.7 Q22.7 17 21.4 17 H2 Q.7 17 .7 15.7 Z" fill="url(#fg13)"/><rect x="3.4" y="5.6" width="12" height="8" rx="1.5" fill="#ffe68c" opacity=".45"/><path d="M1 16.5 H22.4" stroke="#e2ad26" stroke-width=".9" opacity=".75"/></svg>
<span id="t26" class="t" style="left:130.80px;top:368.54px;font-size:17.50px;color:#141414;letter-spacing:0.147px;">International</span>
<svg class="abs" style="left:100.60px;top:397.80px" width="24" height="18" viewBox="0 0 24 18"><defs><linearGradient id="fg14" x1="0" y1="0" x2="0" y2="1"><stop offset="0" stop-color="#fddd70"/><stop offset=".5" stop-color="#fbd455"/><stop offset="1" stop-color="#f5c538"/></linearGradient></defs><path d="M.7 1.5 Q.7 .2 2 .2 H5.6 Q6.5 .2 7.1 .9 L8.8 2.7 H21.4 Q22.7 2.7 22.7 4 V15.7 Q22.7 17 21.4 17 H2 Q.7 17 .7 15.7 Z" fill="#e3b11c"/><path d="M.7 3.9 Q.7 2.9 1.8 2.9 H21.5 Q22.7 2.9 22.7 4.1 V15.7 Q22.7 17 21.4 17 H2 Q.7 17 .7 15.7 Z" fill="url(#fg14)"/><rect x="3.4" y="5.6" width="12" height="8" rx="1.5" fill="#ffe68c" opacity=".45"/><path d="M1 16.5 H22.4" stroke="#e2ad26" stroke-width=".9" opacity=".75"/></svg>
<span id="t27" class="t" style="left:130.80px;top:396.54px;font-size:17.50px;color:#141414;letter-spacing:0.003px;">Keyboard</span>
<div style="position:absolute;left:99.40px;top:421.50px;width:88.40px;height:27.30px;background:#d7d7d9;box-shadow:inset 0 0 0 1px #bcbcbc"></div>
<svg class="abs" style="left:100.60px;top:425.80px" width="24" height="18" viewBox="0 0 24 18"><defs><linearGradient id="fg15" x1="0" y1="0" x2="0" y2="1"><stop offset="0" stop-color="#fddd70"/><stop offset=".5" stop-color="#fbd455"/><stop offset="1" stop-color="#f5c538"/></linearGradient></defs><path d="M.7 1.5 Q.7 .2 2 .2 H5.6 Q6.5 .2 7.1 .9 L8.8 2.7 H21.4 Q22.7 2.7 22.7 4 V15.7 Q22.7 17 21.4 17 H2 Q.7 17 .7 15.7 Z" fill="#e3b11c"/><path d="M.7 3.9 Q.7 2.9 1.8 2.9 H21.5 Q22.7 2.9 22.7 4.1 V15.7 Q22.7 17 21.4 17 H2 Q.7 17 .7 15.7 Z" fill="url(#fg15)"/><rect x="3.4" y="5.6" width="12" height="8" rx="1.5" fill="#ffe68c" opacity=".45"/><path d="M1 16.5 H22.4" stroke="#e2ad26" stroke-width=".9" opacity=".75"/></svg>
<span id="t28" class="t" style="left:130.80px;top:424.54px;font-size:17.50px;color:#141414;letter-spacing:0.352px;">Mouse</span>
<svg class="abs" style="left:83.20px;top:455.20px" width="12" height="16" viewBox="0 0 12 16"><path d="M2.7 2.3 L9.3 8 L2.7 13.7" fill="none" stroke="#8f8f8f" stroke-width="1.55" stroke-linecap="round" stroke-linejoin="round"/></svg>
<svg class="abs" style="left:100.60px;top:453.80px" width="24" height="18" viewBox="0 0 24 18"><defs><linearGradient id="fg16" x1="0" y1="0" x2="0" y2="1"><stop offset="0" stop-color="#fddd70"/><stop offset=".5" stop-color="#fbd455"/><stop offset="1" stop-color="#f5c538"/></linearGradient></defs><path d="M.7 1.5 Q.7 .2 2 .2 H5.6 Q6.5 .2 7.1 .9 L8.8 2.7 H21.4 Q22.7 2.7 22.7 4 V15.7 Q22.7 17 21.4 17 H2 Q.7 17 .7 15.7 Z" fill="#e3b11c"/><path d="M.7 3.9 Q.7 2.9 1.8 2.9 H21.5 Q22.7 2.9 22.7 4.1 V15.7 Q22.7 17 21.4 17 H2 Q.7 17 .7 15.7 Z" fill="url(#fg16)"/><rect x="3.4" y="5.6" width="12" height="8" rx="1.5" fill="#ffe68c" opacity=".45"/><path d="M1 16.5 H22.4" stroke="#e2ad26" stroke-width=".9" opacity=".75"/></svg>
<span id="t29" class="t" style="left:130.80px;top:452.54px;font-size:17.50px;color:#141414;letter-spacing:0.259px;">NotifyIconSettings</span>
<svg class="abs" style="left:83.20px;top:483.20px" width="12" height="16" viewBox="0 0 12 16"><path d="M2.7 2.3 L9.3 8 L2.7 13.7" fill="none" stroke="#8f8f8f" stroke-width="1.55" stroke-linecap="round" stroke-linejoin="round"/></svg>
<svg class="abs" style="left:100.60px;top:481.80px" width="24" height="18" viewBox="0 0 24 18"><defs><linearGradient id="fg17" x1="0" y1="0" x2="0" y2="1"><stop offset="0" stop-color="#fddd70"/><stop offset=".5" stop-color="#fbd455"/><stop offset="1" stop-color="#f5c538"/></linearGradient></defs><path d="M.7 1.5 Q.7 .2 2 .2 H5.6 Q6.5 .2 7.1 .9 L8.8 2.7 H21.4 Q22.7 2.7 22.7 4 V15.7 Q22.7 17 21.4 17 H2 Q.7 17 .7 15.7 Z" fill="#e3b11c"/><path d="M.7 3.9 Q.7 2.9 1.8 2.9 H21.5 Q22.7 2.9 22.7 4.1 V15.7 Q22.7 17 21.4 17 H2 Q.7 17 .7 15.7 Z" fill="url(#fg17)"/><rect x="3.4" y="5.6" width="12" height="8" rx="1.5" fill="#ffe68c" opacity=".45"/><path d="M1 16.5 H22.4" stroke="#e2ad26" stroke-width=".9" opacity=".75"/></svg>
<span id="t30" class="t" style="left:130.80px;top:480.54px;font-size:17.50px;color:#141414;letter-spacing:-0.159px;">Personalization</span>
<svg class="abs" style="left:83.20px;top:511.20px" width="12" height="16" viewBox="0 0 12 16"><path d="M2.7 2.3 L9.3 8 L2.7 13.7" fill="none" stroke="#8f8f8f" stroke-width="1.55" stroke-linecap="round" stroke-linejoin="round"/></svg>
<svg class="abs" style="left:100.60px;top:509.80px" width="24" height="18" viewBox="0 0 24 18"><defs><linearGradient id="fg18" x1="0" y1="0" x2="0" y2="1"><stop offset="0" stop-color="#fddd70"/><stop offset=".5" stop-color="#fbd455"/><stop offset="1" stop-color="#f5c538"/></linearGradient></defs><path d="M.7 1.5 Q.7 .2 2 .2 H5.6 Q6.5 .2 7.1 .9 L8.8 2.7 H21.4 Q22.7 2.7 22.7 4 V15.7 Q22.7 17 21.4 17 H2 Q.7 17 .7 15.7 Z" fill="#e3b11c"/><path d="M.7 3.9 Q.7 2.9 1.8 2.9 H21.5 Q22.7 2.9 22.7 4.1 V15.7 Q22.7 17 21.4 17 H2 Q.7 17 .7 15.7 Z" fill="url(#fg18)"/><rect x="3.4" y="5.6" width="12" height="8" rx="1.5" fill="#ffe68c" opacity=".45"/><path d="M1 16.5 H22.4" stroke="#e2ad26" stroke-width=".9" opacity=".75"/></svg>
<span id="t31" class="t" style="left:130.80px;top:508.54px;font-size:17.50px;color:#141414;letter-spacing:-0.272px;">PowerCfg</span>
<svg class="abs" style="left:83.20px;top:539.20px" width="12" height="16" viewBox="0 0 12 16"><path d="M2.7 2.3 L9.3 8 L2.7 13.7" fill="none" stroke="#8f8f8f" stroke-width="1.55" stroke-linecap="round" stroke-linejoin="round"/></svg>
<svg class="abs" style="left:100.60px;top:537.80px" width="24" height="18" viewBox="0 0 24 18"><defs><linearGradient id="fg19" x1="0" y1="0" x2="0" y2="1"><stop offset="0" stop-color="#fddd70"/><stop offset=".5" stop-color="#fbd455"/><stop offset="1" stop-color="#f5c538"/></linearGradient></defs><path d="M.7 1.5 Q.7 .2 2 .2 H5.6 Q6.5 .2 7.1 .9 L8.8 2.7 H21.4 Q22.7 2.7 22.7 4 V15.7 Q22.7 17 21.4 17 H2 Q.7 17 .7 15.7 Z" fill="#e3b11c"/><path d="M.7 3.9 Q.7 2.9 1.8 2.9 H21.5 Q22.7 2.9 22.7 4.1 V15.7 Q22.7 17 21.4 17 H2 Q.7 17 .7 15.7 Z" fill="url(#fg19)"/><rect x="3.4" y="5.6" width="12" height="8" rx="1.5" fill="#ffe68c" opacity=".45"/><path d="M1 16.5 H22.4" stroke="#e2ad26" stroke-width=".9" opacity=".75"/></svg>
<span id="t32" class="t" style="left:130.80px;top:536.54px;font-size:17.50px;color:#141414;letter-spacing:0.081px;">Quick Actions</span>
<svg class="abs" style="left:100.60px;top:565.80px" width="24" height="18" viewBox="0 0 24 18"><defs><linearGradient id="fg20" x1="0" y1="0" x2="0" y2="1"><stop offset="0" stop-color="#fddd70"/><stop offset=".5" stop-color="#fbd455"/><stop offset="1" stop-color="#f5c538"/></linearGradient></defs><path d="M.7 1.5 Q.7 .2 2 .2 H5.6 Q6.5 .2 7.1 .9 L8.8 2.7 H21.4 Q22.7 2.7 22.7 4 V15.7 Q22.7 17 21.4 17 H2 Q.7 17 .7 15.7 Z" fill="#e3b11c"/><path d="M.7 3.9 Q.7 2.9 1.8 2.9 H21.5 Q22.7 2.9 22.7 4.1 V15.7 Q22.7 17 21.4 17 H2 Q.7 17 .7 15.7 Z" fill="url(#fg20)"/><rect x="3.4" y="5.6" width="12" height="8" rx="1.5" fill="#ffe68c" opacity=".45"/><path d="M1 16.5 H22.4" stroke="#e2ad26" stroke-width=".9" opacity=".75"/></svg>
<span id="t33" class="t" style="left:130.80px;top:564.54px;font-size:17.50px;color:#141414;letter-spacing:0.207px;">Sound</span>
<svg class="abs" style="left:83.20px;top:595.20px" width="12" height="16" viewBox="0 0 12 16"><path d="M2.7 2.3 L9.3 8 L2.7 13.7" fill="none" stroke="#8f8f8f" stroke-width="1.55" stroke-linecap="round" stroke-linejoin="round"/></svg>
<svg class="abs" style="left:100.60px;top:593.80px" width="24" height="18" viewBox="0 0 24 18"><defs><linearGradient id="fg21" x1="0" y1="0" x2="0" y2="1"><stop offset="0" stop-color="#fddd70"/><stop offset=".5" stop-color="#fbd455"/><stop offset="1" stop-color="#f5c538"/></linearGradient></defs><path d="M.7 1.5 Q.7 .2 2 .2 H5.6 Q6.5 .2 7.1 .9 L8.8 2.7 H21.4 Q22.7 2.7 22.7 4 V15.7 Q22.7 17 21.4 17 H2 Q.7 17 .7 15.7 Z" fill="#e3b11c"/><path d="M.7 3.9 Q.7 2.9 1.8 2.9 H21.5 Q22.7 2.9 22.7 4.1 V15.7 Q22.7 17 21.4 17 H2 Q.7 17 .7 15.7 Z" fill="url(#fg21)"/><rect x="3.4" y="5.6" width="12" height="8" rx="1.5" fill="#ffe68c" opacity=".45"/><path d="M1 16.5 H22.4" stroke="#e2ad26" stroke-width=".9" opacity=".75"/></svg>
<span id="t34" class="t" style="left:130.80px;top:592.54px;font-size:17.50px;color:#141414;letter-spacing:-0.110px;">TimeDate</span>
<svg class="abs" style="left:100.60px;top:621.80px" width="24" height="18" viewBox="0 0 24 18"><defs><linearGradient id="fg22" x1="0" y1="0" x2="0" y2="1"><stop offset="0" stop-color="#fddd70"/><stop offset=".5" stop-color="#fbd455"/><stop offset="1" stop-color="#f5c538"/></linearGradient></defs><path d="M.7 1.5 Q.7 .2 2 .2 H5.6 Q6.5 .2 7.1 .9 L8.8 2.7 H21.4 Q22.7 2.7 22.7 4 V15.7 Q22.7 17 21.4 17 H2 Q.7 17 .7 15.7 Z" fill="#e3b11c"/><path d="M.7 3.9 Q.7 2.9 1.8 2.9 H21.5 Q22.7 2.9 22.7 4.1 V15.7 Q22.7 17 21.4 17 H2 Q.7 17 .7 15.7 Z" fill="url(#fg22)"/><rect x="3.4" y="5.6" width="12" height="8" rx="1.5" fill="#ffe68c" opacity=".45"/><path d="M1 16.5 H22.4" stroke="#e2ad26" stroke-width=".9" opacity=".75"/></svg>
<span id="t35" class="t" style="left:130.80px;top:620.54px;font-size:17.50px;color:#141414;letter-spacing:0.076px;">UnsupportedHardware</span>
</div>
<span id="t36" class="t" style="left:334.60px;top:111.14px;font-size:17.50px;color:#141414;letter-spacing:0.151px;">Name</span>
<span id="t37" class="t" style="left:575.00px;top:111.14px;font-size:17.50px;color:#141414;letter-spacing:-0.236px;">Type</span>
<span id="t38" class="t" style="left:754.00px;top:111.14px;font-size:17.50px;color:#141414;letter-spacing:-0.144px;">Data</span>
<div style="position:absolute;left:567.60px;top:106.00px;width:1.00px;height:32.00px;background:#f0f0f0"></div>
<div style="position:absolute;left:747.20px;top:106.00px;width:1.00px;height:32.00px;background:#f0f0f0"></div>
<svg class="abs" style="left:330.80px;top:138.00px" width="26" height="25" viewBox="0 0 26 25"><path d="M1.3 1.4 H18.6 L24.2 6.6 V23.2 C22.2 23.9 20.6 22.6 18.6 21.2 C16.2 19.6 14.2 19.8 12.4 21.2 C10.4 22.8 8.4 22.8 6.6 21.6 C4.8 20.4 3 20.2 1.3 20.8 Z" fill="#fdfdfd" stroke="#a9a9a9" stroke-width="1.1" stroke-linejoin="round"/><path d="M18.6 1.4 V6.6 H24.2" fill="#e9efe9" stroke="#9fb0a4" stroke-width="1"/><text x="3.1" y="15.9" font-family="Liberation Sans,sans-serif" font-weight="700" font-size="15" letter-spacing="-.2" fill="#d54d2e">ab</text></svg>
<span id="t39" class="t" style="left:358.30px;top:141.44px;font-size:17.50px;color:#141414;letter-spacing:0.053px;">(Default)</span>
<span id="t40" class="t" style="left:573.70px;top:141.44px;font-size:17.50px;color:#141414;transform:scaleX(0.8337);transform-origin:0 50%;">REG_SZ</span>
<span id="t41" class="t" style="left:754.20px;top:141.44px;font-size:17.50px;color:#141414;letter-spacing:0.053px;">(value not set)</span>
<svg class="abs" style="left:330.80px;top:167.00px" width="26" height="25" viewBox="0 0 26 25"><path d="M1.3 1.4 H18.6 L24.2 6.6 V23.2 C22.2 23.9 20.6 22.6 18.6 21.2 C16.2 19.6 14.2 19.8 12.4 21.2 C10.4 22.8 8.4 22.8 6.6 21.6 C4.8 20.4 3 20.2 1.3 20.8 Z" fill="#e9eeff" stroke="#a9a9a9" stroke-width="1.1" stroke-linejoin="round"/><path d="M18.6 1.4 V6.6 H24.2" fill="#e9efe9" stroke="#9fb0a4" stroke-width="1"/><g font-weight="700" fill="#3a4fd0" stroke="#3a4fd0" stroke-width=".34" transform="scale(1.27 1)" letter-spacing=".62"><text x="2.5" y="11.8" font-family="Liberation Sans,sans-serif" font-size="8.7">011</text><text x="2.5" y="19.2" font-family="Liberation Sans,sans-serif" font-size="8.7">110</text></g></svg>
<span id="t42" class="t" style="left:358.30px;top:170.44px;font-size:17.50px;color:#141414;letter-spacing:0.099px;">ActiveWindowTracking</span>
<span id="t43" class="t" style="left:573.70px;top:170.44px;font-size:17.50px;color:#141414;transform:scaleX(0.9302);transform-origin:0 50%;">REG_DWORD</span>
<span id="t44" class="t" style="left:754.20px;top:170.44px;font-size:17.50px;color:#141414;letter-spacing:0.041px;">0x00000000 (0)</span>
<svg class="abs" style="left:330.80px;top:196.00px" width="26" height="25" viewBox="0 0 26 25"><path d="M1.3 1.4 H18.6 L24.2 6.6 V23.2 C22.2 23.9 20.6 22.6 18.6 21.2 C16.2 19.6 14.2 19.8 12.4 21.2 C10.4 22.8 8.4 22.8 6.6 21.6 C4.8 20.4 3 20.2 1.3 20.8 Z" fill="#fdfdfd" stroke="#a9a9a9" stroke-width="1.1" stroke-linejoin="round"/><path d="M18.6 1.4 V6.6 H24.2" fill="#e9efe9" stroke="#9fb0a4" stroke-width="1"/><text x="3.1" y="15.9" font-family="Liberation Sans,sans-serif" font-weight="700" font-size="15" letter-spacing="-.2" fill="#d54d2e">ab</text></svg>
<span id="t45" class="t" style="left:358.30px;top:199.44px;font-size:17.50px;color:#141414;transform:scaleX(0.9505);transform-origin:0 50%;">Beep</span>
<span id="t46" class="t" style="left:573.70px;top:199.44px;font-size:17.50px;color:#141414;transform:scaleX(0.8337);transform-origin:0 50%;">REG_SZ</span>
<span id="t47" class="t" style="left:754.20px;top:199.44px;font-size:17.50px;color:#141414;transform:scaleX(1.0805);transform-origin:0 50%;">No</span>
<svg class="abs" style="left:330.80px;top:225.00px" width="26" height="25" viewBox="0 0 26 25"><path d="M1.3 1.4 H18.6 L24.2 6.6 V23.2 C22.2 23.9 20.6 22.6 18.6 21.2 C16.2 19.6 14.2 19.8 12.4 21.2 C10.4 22.8 8.4 22.8 6.6 21.6 C4.8 20.4 3 20.2 1.3 20.8 Z" fill="#fdfdfd" stroke="#a9a9a9" stroke-width="1.1" stroke-linejoin="round"/><path d="M18.6 1.4 V6.6 H24.2" fill="#e9efe9" stroke="#9fb0a4" stroke-width="1"/><text x="3.1" y="15.9" font-family="Liberation Sans,sans-serif" font-weight="700" font-size="15" letter-spacing="-.2" fill="#d54d2e">ab</text></svg>
<span id="t48" class="t" style="left:358.30px;top:228.44px;font-size:17.50px;color:#141414;letter-spacing:0.163px;">DoubleClickHeight</span>
<span id="t49" class="t" style="left:573.70px;top:228.44px;font-size:17.50px;color:#141414;transform:scaleX(0.8337);transform-origin:0 50%;">REG_SZ</span>
<span id="t50" class="t" style="left:754.20px;top:228.44px;font-size:17.50px;color:#141414;transform:scaleX(0.9600);transform-origin:0 50%;">4</span>
<svg class="abs" style="left:330.80px;top:254.00px" width="26" height="25" viewBox="0 0 26 25"><path d="M1.3 1.4 H18.6 L24.2 6.6 V23.2 C22.2 23.9 20.6 22.6 18.6 21.2 C16.2 19.6 14.2 19.8 12.4 21.2 C10.4 22.8 8.4 22.8 6.6 21.6 C4.8 20.4 3 20.2 1.3 20.8 Z" fill="#fdfdfd" stroke="#a9a9a9" stroke-width="1.1" stroke-linejoin="round"/><path d="M18.6 1.4 V6.6 H24.2" fill="#e9efe9" stroke="#9fb0a4" stroke-width="1"/><text x="3.1" y="15.9" font-family="Liberation Sans,sans-serif" font-weight="700" font-size="15" letter-spacing="-.2" fill="#d54d2e">ab</text></svg>
<span id="t51" class="t" style="left:358.30px;top:257.44px;font-size:17.50px;color:#141414;letter-spacing:-0.003px;">DoubleClickSpeed</span>
<span id="t52" class="t" style="left:573.70px;top:257.44px;font-size:17.50px;color:#141414;transform:scaleX(0.8337);transform-origin:0 50%;">REG_SZ</span>
<span id="t53" class="t" style="left:754.20px;top:257.44px;font-size:17.50px;color:#141414;letter-spacing:0.167px;">500</span>
<svg class="abs" style="left:330.80px;top:283.00px" width="26" height="25" viewBox="0 0 26 25"><path d="M1.3 1.4 H18.6 L24.2 6.6 V23.2 C22.2 23.9 20.6 22.6 18.6 21.2 C16.2 19.6 14.2 19.8 12.4 21.2 C10.4 22.8 8.4 22.8 6.6 21.6 C4.8 20.4 3 20.2 1.3 20.8 Z" fill="#fdfdfd" stroke="#a9a9a9" stroke-width="1.1" stroke-linejoin="round"/><path d="M18.6 1.4 V6.6 H24.2" fill="#e9efe9" stroke="#9fb0a4" stroke-width="1"/><text x="3.1" y="15.9" font-family="Liberation Sans,sans-serif" font-weight="700" font-size="15" letter-spacing="-.2" fill="#d54d2e">ab</text></svg>
<span id="t54" class="t" style="left:358.30px;top:286.44px;font-size:17.50px;color:#141414;letter-spacing:0.289px;">DoubleClickWidth</span>
<span id="t55" class="t" style="left:573.70px;top:286.44px;font-size:17.50px;color:#141414;transform:scaleX(0.8337);transform-origin:0 50%;">REG_SZ</span>
<span id="t56" class="t" style="left:754.20px;top:286.44px;font-size:17.50px;color:#141414;transform:scaleX(0.9600);transform-origin:0 50%;">4</span>
<svg class="abs" style="left:330.80px;top:312.00px" width="26" height="25" viewBox="0 0 26 25"><path d="M1.3 1.4 H18.6 L24.2 6.6 V23.2 C22.2 23.9 20.6 22.6 18.6 21.2 C16.2 19.6 14.2 19.8 12.4 21.2 C10.4 22.8 8.4 22.8 6.6 21.6 C4.8 20.4 3 20.2 1.3 20.8 Z" fill="#fdfdfd" stroke="#a9a9a9" stroke-width="1.1" stroke-linejoin="round"/><path d="M18.6 1.4 V6.6 H24.2" fill="#e9efe9" stroke="#9fb0a4" stroke-width="1"/><text x="3.1" y="15.9" font-family="Liberation Sans,sans-serif" font-weight="700" font-size="15" letter-spacing="-.2" fill="#d54d2e">ab</text></svg>
<span id="t57" class="t" style="left:358.30px;top:315.44px;font-size:17.50px;color:#141414;">ExtendedSounds</span>
<span id="t58" class="t" style="left:573.70px;top:315.44px;font-size:17.50px;color:#141414;transform:scaleX(0.8337);transform-origin:0 50%;">REG_SZ</span>
<span id="t59" class="t" style="left:754.20px;top:315.44px;font-size:17.50px;color:#141414;transform:scaleX(1.0805);transform-origin:0 50%;">No</span>
<svg class="abs" style="left:330.80px;top:341.00px" width="26" height="25" viewBox="0 0 26 25"><path d="M1.3 1.4 H18.6 L24.2 6.6 V23.2 C22.2 23.9 20.6 22.6 18.6 21.2 C16.2 19.6 14.2 19.8 12.4 21.2 C10.4 22.8 8.4 22.8 6.6 21.6 C4.8 20.4 3 20.2 1.3 20.8 Z" fill="#fdfdfd" stroke="#a9a9a9" stroke-width="1.1" stroke-linejoin="round"/><path d="M18.6 1.4 V6.6 H24.2" fill="#e9efe9" stroke="#9fb0a4" stroke-width="1"/><text x="3.1" y="15.9" font-family="Liberation Sans,sans-serif" font-weight="700" font-size="15" letter-spacing="-.2" fill="#d54d2e">ab</text></svg>
<span id="t60" class="t" style="left:358.30px;top:344.44px;font-size:17.50px;color:#141414;">MouseHoverHeight</span>
<span id="t61" class="t" style="left:573.70px;top:344.44px;font-size:17.50px;color:#141414;transform:scaleX(0.8337);transform-origin:0 50%;">REG_SZ</span>
<span id="t62" class="t" style="left:754.20px;top:344.44px;font-size:17.50px;color:#141414;transform:scaleX(0.9600);transform-origin:0 50%;">4</span>
<svg class="abs" style="left:330.80px;top:370.00px" width="26" height="25" viewBox="0 0 26 25"><path d="M1.3 1.4 H18.6 L24.2 6.6 V23.2 C22.2 23.9 20.6 22.6 18.6 21.2 C16.2 19.6 14.2 19.8 12.4 21.2 C10.4 22.8 8.4 22.8 6.6 21.6 C4.8 20.4 3 20.2 1.3 20.8 Z" fill="#fdfdfd" stroke="#a9a9a9" stroke-width="1.1" stroke-linejoin="round"/><path d="M18.6 1.4 V6.6 H24.2" fill="#e9efe9" stroke="#9fb0a4" stroke-width="1"/><text x="3.1" y="15.9" font-family="Liberation Sans,sans-serif" font-weight="700" font-size="15" letter-spacing="-.2" fill="#d54d2e">ab</text></svg>
<span id="t63" class="t" style="left:358.30px;top:373.44px;font-size:17.50px;color:#141414;">MouseHoverTime</span>
<span id="t64" class="t" style="left:573.70px;top:373.44px;font-size:17.50px;color:#141414;transform:scaleX(0.8337);transform-origin:0 50%;">REG_SZ</span>
<span id="t65" class="t" style="left:754.20px;top:373.44px;font-size:17.50px;color:#141414;letter-spacing:0.167px;">400</span>
<svg class="abs" style="left:330.80px;top:399.00px" width="26" height="25" viewBox="0 0 26 25"><path d="M1.3 1.4 H18.6 L24.2 6.6 V23.2 C22.2 23.9 20.6 22.6 18.6 21.2 C16.2 19.6 14.2 19.8 12.4 21.2 C10.4 22.8 8.4 22.8 6.6 21.6 C4.8 20.4 3 20.2 1.3 20.8 Z" fill="#fdfdfd" stroke="#a9a9a9" stroke-width="1.1" stroke-linejoin="round"/><path d="M18.6 1.4 V6.6 H24.2" fill="#e9efe9" stroke="#9fb0a4" stroke-width="1"/><text x="3.1" y="15.9" font-family="Liberation Sans,sans-serif" font-weight="700" font-size="15" letter-spacing="-.2" fill="#d54d2e">ab</text></svg>
<span id="t66" class="t" style="left:358.30px;top:402.44px;font-size:17.50px;color:#141414;">MouseHoverWidth</span>
<span id="t67" class="t" style="left:573.70px;top:402.44px;font-size:17.50px;color:#141414;transform:scaleX(0.8337);transform-origin:0 50%;">REG_SZ</span>
<span id="t68" class="t" style="left:754.20px;top:402.44px;font-size:17.50px;color:#141414;transform:scaleX(0.9600);transform-origin:0 50%;">4</span>
<svg class="abs" style="left:330.80px;top:428.00px" width="26" height="25" viewBox="0 0 26 25"><path d="M1.3 1.4 H18.6 L24.2 6.6 V23.2 C22.2 23.9 20.6 22.6 18.6 21.2 C16.2 19.6 14.2 19.8 12.4 21.2 C10.4 22.8 8.4 22.8 6.6 21.6 C4.8 20.4 3 20.2 1.3 20.8 Z" fill="#fdfdfd" stroke="#a9a9a9" stroke-width="1.1" stroke-linejoin="round"/><path d="M18.6 1.4 V6.6 H24.2" fill="#e9efe9" stroke="#9fb0a4" stroke-width="1"/><text x="3.1" y="15.9" font-family="Liberation Sans,sans-serif" font-weight="700" font-size="15" letter-spacing="-.2" fill="#d54d2e">ab</text></svg>
<span id="t69" class="t" style="left:358.30px;top:431.44px;font-size:17.50px;color:#141414;">MouseSensitivity</span>
<span id="t70" class="t" style="left:573.70px;top:431.44px;font-size:17.50px;color:#141414;transform:scaleX(0.8337);transform-origin:0 50%;">REG_SZ</span>
<span id="t71" class="t" style="left:754.20px;top:431.44px;font-size:17.50px;color:#141414;letter-spacing:0.067px;">10</span>
<svg class="abs" style="left:330.80px;top:457.00px" width="26" height="25" viewBox="0 0 26 25"><path d="M1.3 1.4 H18.6 L24.2 6.6 V23.2 C22.2 23.9 20.6 22.6 18.6 21.2 C16.2 19.6 14.2 19.8 12.4 21.2 C10.4 22.8 8.4 22.8 6.6 21.6 C4.8 20.4 3 20.2 1.3 20.8 Z" fill="#fdfdfd" stroke="#a9a9a9" stroke-width="1.1" stroke-linejoin="round"/><path d="M18.6 1.4 V6.6 H24.2" fill="#e9efe9" stroke="#9fb0a4" stroke-width="1"/><text x="3.1" y="15.9" font-family="Liberation Sans,sans-serif" font-weight="700" font-size="15" letter-spacing="-.2" fill="#d54d2e">ab</text></svg>
<span id="t72" class="t" style="left:358.30px;top:460.44px;font-size:17.50px;color:#141414;">MouseSpeed</span>
<span id="t73" class="t" style="left:573.70px;top:460.44px;font-size:17.50px;color:#141414;transform:scaleX(0.8337);transform-origin:0 50%;">REG_SZ</span>
<span id="t74" class="t" style="left:754.20px;top:460.44px;font-size:17.50px;color:#141414;transform:scaleX(1.0750);transform-origin:0 50%;">1</span>
<svg class="abs" style="left:330.80px;top:486.00px" width="26" height="25" viewBox="0 0 26 25"><path d="M1.3 1.4 H18.6 L24.2 6.6 V23.2 C22.2 23.9 20.6 22.6 18.6 21.2 C16.2 19.6 14.2 19.8 12.4 21.2 C10.4 22.8 8.4 22.8 6.6 21.6 C4.8 20.4 3 20.2 1.3 20.8 Z" fill="#fdfdfd" stroke="#a9a9a9" stroke-width="1.1" stroke-linejoin="round"/><path d="M18.6 1.4 V6.6 H24.2" fill="#e9efe9" stroke="#9fb0a4" stroke-width="1"/><text x="3.1" y="15.9" font-family="Liberation Sans,sans-serif" font-weight="700" font-size="15" letter-spacing="-.2" fill="#d54d2e">ab</text></svg>
<span id="t75" class="t" style="left:358.30px;top:489.44px;font-size:17.50px;color:#141414;">MouseThreshold1</span>
<span id="t76" class="t" style="left:573.70px;top:489.44px;font-size:17.50px;color:#141414;transform:scaleX(0.8337);transform-origin:0 50%;">REG_SZ</span>
<span id="t77" class="t" style="left:754.20px;top:489.44px;font-size:17.50px;color:#141414;transform:scaleX(1.0667);transform-origin:0 50%;">6</span>
<svg class="abs" style="left:330.80px;top:515.00px" width="26" height="25" viewBox="0 0 26 25"><path d="M1.3 1.4 H18.6 L24.2 6.6 V23.2 C22.2 23.9 20.6 22.6 18.6 21.2 C16.2 19.6 14.2 19.8 12.4 21.2 C10.4 22.8 8.4 22.8 6.6 21.6 C4.8 20.4 3 20.2 1.3 20.8 Z" fill="#fdfdfd" stroke="#a9a9a9" stroke-width="1.1" stroke-linejoin="round"/><path d="M18.6 1.4 V6.6 H24.2" fill="#e9efe9" stroke="#9fb0a4" stroke-width="1"/><text x="3.1" y="15.9" font-family="Liberation Sans,sans-serif" font-weight="700" font-size="15" letter-spacing="-.2" fill="#d54d2e">ab</text></svg>
<span id="t78" class="t" style="left:358.30px;top:518.44px;font-size:17.50px;color:#141414;">MouseThreshold2</span>
<span id="t79" class="t" style="left:573.70px;top:518.44px;font-size:17.50px;color:#141414;transform:scaleX(0.8337);transform-origin:0 50%;">REG_SZ</span>
<span id="t80" class="t" style="left:754.20px;top:518.44px;font-size:17.50px;color:#141414;letter-spacing:0.067px;">10</span>
<svg class="abs" style="left:330.80px;top:544.00px" width="26" height="25" viewBox="0 0 26 25"><path d="M1.3 1.4 H18.6 L24.2 6.6 V23.2 C22.2 23.9 20.6 22.6 18.6 21.2 C16.2 19.6 14.2 19.8 12.4 21.2 C10.4 22.8 8.4 22.8 6.6 21.6 C4.8 20.4 3 20.2 1.3 20.8 Z" fill="#fdfdfd" stroke="#a9a9a9" stroke-width="1.1" stroke-linejoin="round"/><path d="M18.6 1.4 V6.6 H24.2" fill="#e9efe9" stroke="#9fb0a4" stroke-width="1"/><text x="3.1" y="15.9" font-family="Liberation Sans,sans-serif" font-weight="700" font-size="15" letter-spacing="-.2" fill="#d54d2e">ab</text></svg>
<span id="t81" class="t" style="left:358.30px;top:547.44px;font-size:17.50px;color:#141414;letter-spacing:-0.370px;">MouseTrails</span>
<span id="t82" class="t" style="left:573.70px;top:547.44px;font-size:17.50px;color:#141414;transform:scaleX(0.8337);transform-origin:0 50%;">REG_SZ</span>
<span id="t83" class="t" style="left:754.20px;top:547.44px;font-size:17.50px;color:#141414;transform:scaleX(0.9600);transform-origin:0 50%;">0</span>
<svg class="abs" style="left:330.80px;top:573.00px" width="26" height="25" viewBox="0 0 26 25"><path d="M1.3 1.4 H18.6 L24.2 6.6 V23.2 C22.2 23.9 20.6 22.6 18.6 21.2 C16.2 19.6 14.2 19.8 12.4 21.2 C10.4 22.8 8.4 22.8 6.6 21.6 C4.8 20.4 3 20.2 1.3 20.8 Z" fill="#e9eeff" stroke="#a9a9a9" stroke-width="1.1" stroke-linejoin="round"/><path d="M18.6 1.4 V6.6 H24.2" fill="#e9efe9" stroke="#9fb0a4" stroke-width="1"/><g font-weight="700" fill="#3a4fd0" stroke="#3a4fd0" stroke-width=".34" transform="scale(1.27 1)" letter-spacing=".62"><text x="2.5" y="11.8" font-family="Liberation Sans,sans-serif" font-size="8.7">011</text><text x="2.5" y="19.2" font-family="Liberation Sans,sans-serif" font-size="8.7">110</text></g></svg>
<span id="t84" class="t" style="left:358.30px;top:576.44px;font-size:17.50px;color:#141414;letter-spacing:0.171px;">SmoothMouseXCurve</span>
<span id="t85" class="t" style="left:573.70px;top:576.44px;font-size:17.50px;color:#141414;transform:scaleX(0.8880);transform-origin:0 50%;">REG_BINARY</span>
<span id="t86" class="t" style="left:754.20px;top:576.44px;font-size:17.50px;color:#141414;letter-spacing:0.197px;">00 00 00 00 00 00 00 00 15 6e 00 00 00 00 00</span>
<svg class="abs" style="left:330.80px;top:602.00px" width="26" height="25" viewBox="0 0 26 25"><path d="M1.3 1.4 H18.6 L24.2 6.6 V23.2 C22.2 23.9 20.6 22.6 18.6 21.2 C16.2 19.6 14.2 19.8 12.4 21.2 C10.4 22.8 8.4 22.8 6.6 21.6 C4.8 20.4 3 20.2 1.3 20.8 Z" fill="#e9eeff" stroke="#a9a9a9" stroke-width="1.1" stroke-linejoin="round"/><path d="M18.6 1.4 V6.6 H24.2" fill="#e9efe9" stroke="#9fb0a4" stroke-width="1"/><g font-weight="700" fill="#3a4fd0" stroke="#3a4fd0" stroke-width=".34" transform="scale(1.27 1)" letter-spacing=".62"><text x="2.5" y="11.8" font-family="Liberation Sans,sans-serif" font-size="8.7">011</text><text x="2.5" y="19.2" font-family="Liberation Sans,sans-serif" font-size="8.7">110</text></g></svg>
<span id="t87" class="t" style="left:358.30px;top:605.44px;font-size:17.50px;color:#141414;letter-spacing:0.046px;">SmoothMouseYCurve</span>
<span id="t88" class="t" style="left:573.70px;top:605.44px;font-size:17.50px;color:#141414;transform:scaleX(0.8880);transform-origin:0 50%;">REG_BINARY</span>
<span id="t89" class="t" style="left:754.20px;top:605.44px;font-size:17.50px;color:#141414;letter-spacing:0.301px;">00 00 00 00 00 00 00 00 fd 11 01 00 00 00 00</span>
<svg class="abs" style="left:330.80px;top:631.00px" width="26" height="25" viewBox="0 0 26 25"><path d="M1.3 1.4 H18.6 L24.2 6.6 V23.2 C22.2 23.9 20.6 22.6 18.6 21.2 C16.2 19.6 14.2 19.8 12.4 21.2 C10.4 22.8 8.4 22.8 6.6 21.6 C4.8 20.4 3 20.2 1.3 20.8 Z" fill="#fdfdfd" stroke="#a9a9a9" stroke-width="1.1" stroke-linejoin="round"/><path d="M18.6 1.4 V6.6 H24.2" fill="#e9efe9" stroke="#9fb0a4" stroke-width="1"/><text x="3.1" y="15.9" font-family="Liberation Sans,sans-serif" font-weight="700" font-size="15" letter-spacing="-.2" fill="#d54d2e">ab</text></svg>
<span id="t90" class="t" style="left:358.30px;top:634.44px;font-size:17.50px;color:#141414;letter-spacing:0.158px;">SnapToDefaultButton</span>
<span id="t91" class="t" style="left:573.70px;top:634.44px;font-size:17.50px;color:#141414;transform:scaleX(0.8337);transform-origin:0 50%;">REG_SZ</span>
<span id="t92" class="t" style="left:754.20px;top:634.44px;font-size:17.50px;color:#141414;transform:scaleX(0.9600);transform-origin:0 50%;">0</span>
<svg class="abs" style="left:330.80px;top:660.00px" width="26" height="25" viewBox="0 0 26 25"><path d="M1.3 1.4 H18.6 L24.2 6.6 V23.2 C22.2 23.9 20.6 22.6 18.6 21.2 C16.2 19.6 14.2 19.8 12.4 21.2 C10.4 22.8 8.4 22.8 6.6 21.6 C4.8 20.4 3 20.2 1.3 20.8 Z" fill="#fdfdfd" stroke="#a9a9a9" stroke-width="1.1" stroke-linejoin="round"/><path d="M18.6 1.4 V6.6 H24.2" fill="#e9efe9" stroke="#9fb0a4" stroke-width="1"/><text x="3.1" y="15.9" font-family="Liberation Sans,sans-serif" font-weight="700" font-size="15" letter-spacing="-.2" fill="#d54d2e">ab</text></svg>
<span id="t93" class="t" style="left:358.30px;top:663.44px;font-size:17.50px;color:#141414;letter-spacing:0.107px;">SwapMouseButtons</span>
<span id="t94" class="t" style="left:573.70px;top:663.44px;font-size:17.50px;color:#141414;transform:scaleX(0.8337);transform-origin:0 50%;">REG_SZ</span>
<span id="t95" class="t" style="left:754.20px;top:663.44px;font-size:17.50px;color:#141414;transform:scaleX(0.9600);transform-origin:0 50%;">0</span>
</div>
<div id="dlg" class="abs" style="left:516.00px;top:367.60px;width:568.20px;height:253.00px;border-radius:8px;background:linear-gradient(#f2f3f8 0,#f1f1f4 30px,#f0f0f0 46px);box-shadow:0 0 0 1px rgba(120,120,120,.45),0 26px 56px rgba(0,0,0,.33),0 4px 24px rgba(0,0,0,.16),0 0 34px rgba(0,0,0,.10);overflow:hidden;will-change:transform">
<span id="t96" class="t" style="left:11.20px;top:9.34px;font-size:17.50px;color:#1c1c1c;letter-spacing:0.110px;">Edit String</span>
<svg class="abs" style="left:532.60px;top:11.00px" width="20" height="20" viewBox="0 0 20 20"><path d="M2.6 2.6 L17.2 17.4 M17.2 2.6 L2.6 17.4" stroke="#1c1c1c" stroke-width="1.45" stroke-linecap="round" fill="none"/></svg>
<span id="t97" class="t" style="left:14.80px;top:57.96px;font-size:16.00px;color:#1a1a1a;letter-spacing:0.040px;">Value name:</span>
<div style="position:absolute;left:12.40px;top:88.80px;width:543.60px;height:27.60px;background:linear-gradient(#f8f8f8 0,#f2f2f2 1.5px,#f1f1f1 100%);border-bottom:1.2px solid #868686;box-sizing:border-box"></div>
<span id="t98" class="t" style="left:16.60px;top:88.86px;font-size:16.00px;color:#1a1a1a;letter-spacing:-0.105px;">MouseThreshold1</span>
<span id="t99" class="t" style="left:14.80px;top:130.76px;font-size:16.00px;color:#1a1a1a;letter-spacing:0.308px;">Value data:</span>
<div style="position:absolute;left:12.40px;top:159.20px;width:541.20px;height:27.60px;background:#fff;border-radius:3px 3px 0 0"></div>
<div style="position:absolute;left:12.40px;top:186.20px;width:542.60px;height:2.20px;background:#1860aa;border-radius:0 0 2px 2px"></div>
<span id="t100" class="t" style="left:17.50px;top:160.56px;font-size:16.00px;color:#1a1a1a;transform:scaleX(0.9667);transform-origin:0 50%;">0</span>
<div style="position:absolute;left:321.00px;top:204.40px;width:111.40px;height:32.90px;background:#fcfdfe;border:1.3px solid #5583b0;border-radius:4.5px;box-sizing:border-box;box-shadow:inset 0 0 0 1.4px #dcedfa"></div>
<span id="t101" class="t" style="left:365.60px;top:209.06px;font-size:16.00px;color:#1a1a1a;transform:scaleX(0.9554);transform-origin:0 50%;">OK</span>
<div style="position:absolute;left:443.00px;top:204.40px;width:110.40px;height:32.90px;background:#fdfdfd;border:1px solid #e3e3e3;border-bottom-color:#c9c9c9;border-radius:4.5px;box-sizing:border-box"></div>
<span id="t102" class="t" style="left:473.60px;top:209.06px;font-size:16.00px;color:#1a1a1a;letter-spacing:-0.130px;">Cancel</span>
</div>
</body></html>
